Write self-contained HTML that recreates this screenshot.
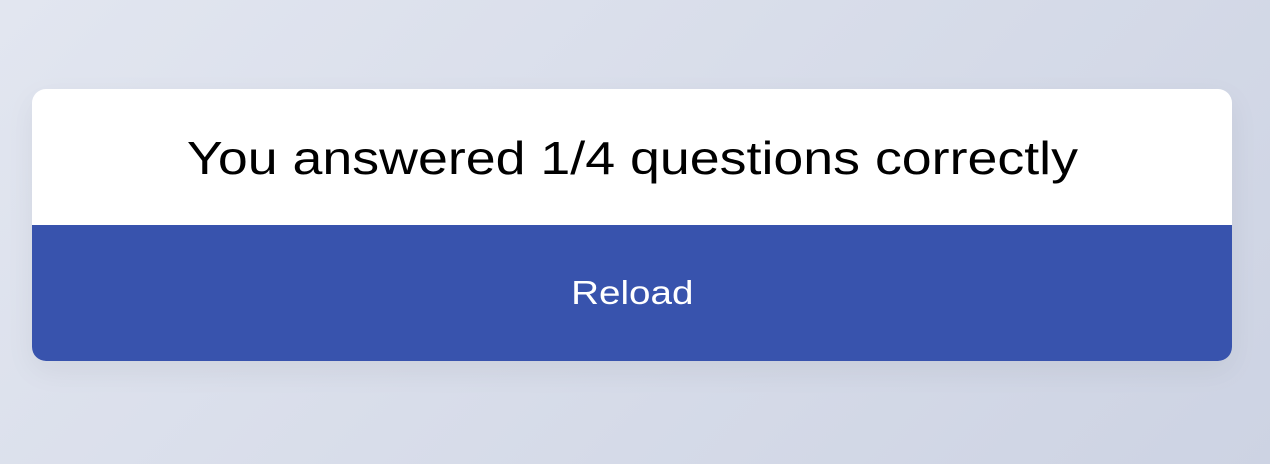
<!DOCTYPE html>
<html><head><style>
html,body{margin:0;padding:0;width:1270px;height:464px;overflow:hidden}
body{background:linear-gradient(135deg,#e2e6f0 0%,#cdd3e3 100%);font-family:"Liberation Sans",sans-serif;position:relative}
.card{position:absolute;left:32px;top:89px;width:1200px;height:272px;border-radius:14px;overflow:hidden;background:#fff;box-shadow:0 10px 30px rgba(0,0,0,0.06)}
.top{height:136px;display:flex;align-items:center;justify-content:center;font-size:46px;color:#000}
.top span{display:inline-block;transform:scaleX(1.168);margin-top:2px}
.btn{height:136px;background:#3853ad;color:#fff;display:flex;align-items:center;justify-content:center;font-size:33px}
.btn span{display:inline-block;transform:scaleX(1.17)}
</style></head><body>
<div class="card"><div class="top"><span>You answered 1/4 questions correctly</span></div><div class="btn"><span>Reload</span></div></div>
</body></html>
